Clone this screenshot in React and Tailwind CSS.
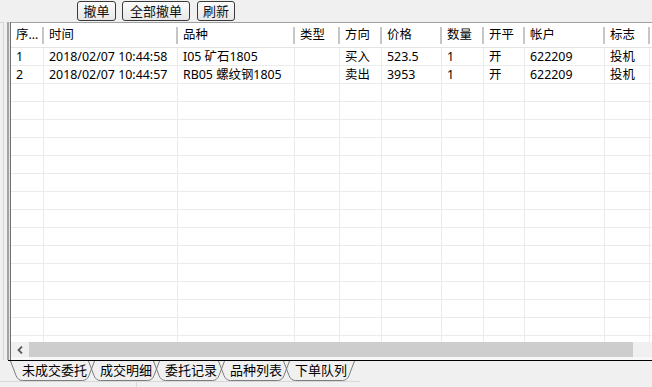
import React from 'react';

// column widths follow the grid lines of the list control
var cols = [
  { t: '序...', w: 'w-[33px]' },
  { t: '时间', w: 'w-[134px]' },
  { t: '品种', w: 'w-[117px]' },
  { t: '类型', w: 'w-[45px]' },
  { t: '方向', w: 'w-[42px]' },
  { t: '价格', w: 'w-[60px]' },
  { t: '数量', w: 'w-[42px]' },
  { t: '开平', w: 'w-[41px]' },
  { t: '帐户', w: 'w-[80px]' },
  { t: '标志', w: 'w-[45px]' },
];

var rows = [
  ['1', '2018/02/07 10:44:58', 'I05 矿石1805', '', '买入', '523.5', '1', '开', '622209', '投机'],
  ['2', '2018/02/07 10:44:57', 'RB05 螺纹钢1805', '', '卖出', '3953', '1', '开', '622209', '投机'],
];

var tabs = [
  { t: '未成交委托', w: 'w-[85px]', n: 85 },
  { t: '成交明细', w: 'w-[72px]', n: 72, active: true },
  { t: '委托记录', w: 'w-[72px]', n: 72 },
  { t: '品种列表', w: 'w-[72px]', n: 72 },
  { t: '下单队列', w: 'w-[72px]', n: 72 },
];

var ToolButton = function (props) {
  return (
    <button className={'h-[20px] ' + props.w + ' ' + props.m + ' shrink-0 rounded-[3px] border border-[#3a3a3a] bg-gradient-to-b from-[#fbfbfb] to-[#e8e8e8] text-[13px] leading-[18px] text-[#111]'}>
      {props.children}
    </button>
  );
};

var Tab = function (props) {
  var W = props.n;
  var d = 'M0.5,0 L6,14.5 Q8,19.5 12.5,19.5 L' + (W - 12.5) + ',19.5 Q' + (W - 8) + ',19.5 ' + (W - 6) + ',14.5 L' + (W - 0.5) + ',0';
  return (
    <div className={'relative h-[20px] shrink-0 ' + props.w + ' ' + (props.first ? '' : '-ml-[7px]') + (props.active ? ' z-10' : '')}>
      <svg className="absolute inset-0" width={W} height="20" viewBox={'0 0 ' + W + ' 20'}>
        <path d={d} fill="none" stroke="#7c7c7c" strokeWidth="1" />
      </svg>
      <span className="relative block pl-[12px] text-[13px] leading-[18px] text-black whitespace-nowrap">{props.t}</span>
    </div>
  );
};

export default function App() {
  var empty = [];
  for (var i = 0; i < 15; i++) empty.push(i);

  return (
    <div className="w-[652px] h-[387px] overflow-hidden bg-[#f0f0f0] font-['Noto_Sans','Noto_Sans_CJK_SC',sans-serif] text-black flex flex-col">
      {/* toolbar */}
      <div className="h-[22px] flex items-start pt-[1px] shrink-0">
        <ToolButton w="w-[39px]" m="ml-[77px]">撤单</ToolButton>
        <ToolButton w="w-[68px]" m="ml-[6px]">全部撤单</ToolButton>
        <ToolButton w="w-[38px]" m="ml-[7px]">刷新</ToolButton>
      </div>

      {/* main area */}
      <div className="h-[338px] flex shrink-0">
        <div className="flex w-[11px] shrink-0">
          <div className="w-[3px] border-t border-[#d4d4d4]" />
          <div className="w-[1px] bg-[#d6d6d6]" />
          <div className="w-[3px]" />
          <div className="w-[2px] bg-[#a3a3a3]" />
          <div className="w-[1px] bg-[#e6e6e6]" />
          <div className="w-[1px] bg-[#707070]" />
        </div>

        <div className="flex-1 flex flex-col border-t border-[#a0a0a0] bg-white min-w-0">
          {/* header */}
          <div className="h-[25px] flex border-b border-[#e4e4e4] shrink-0 text-[12.4px]">
            {cols.map(function (c, k) {
              return (
                <div key={k} className={c.w + ' shrink-0 flex items-center'}>
                  <span className="flex-1 pl-[5px] whitespace-nowrap overflow-hidden">{c.t}</span>
                  <div className="w-[2px] h-[17px] bg-[#c6c6c6]" />
                </div>
              );
            })}
          </div>

          {/* body */}
          <div className="flex-1 overflow-hidden text-[12.4px]">
            {rows.map(function (r, k) {
              return (
                <div key={k} className="h-[18px] flex border-b border-[#ebebeb]">
                  {cols.map(function (c, j) {
                    return (
                      <div key={j} className={c.w + ' shrink-0 border-r border-[#ebebeb] pl-[5px] leading-[17px] whitespace-nowrap overflow-hidden'}>{r[j]}</div>
                    );
                  })}
                </div>
              );
            })}
            {empty.map(function (k) {
              return (
                <div key={'e' + k} className="h-[18px] flex border-b border-[#ebebeb]">
                  {cols.map(function (c, j) {
                    return <div key={j} className={c.w + ' shrink-0 border-r border-[#ebebeb]'} />;
                  })}
                </div>
              );
            })}
          </div>

          {/* horizontal scrollbar */}
          <div className="h-[15px] flex bg-[#f0f0f0] shrink-0">
            <div className="w-[18px] flex items-center justify-center">
              <svg width="6" height="8" viewBox="0 0 6 8">
                <path d="M5,0.5 L1.5,4 L5,7.5" fill="none" stroke="#5a5a5a" strokeWidth="1.8" />
              </svg>
            </div>
            <div className="w-[604px] bg-[#cdcdcd]" />
            <div className="flex-1" />
          </div>
          <div className="h-[3px] bg-[#f8f8f8] shrink-0" />
        </div>
      </div>

      {/* sheet tabs */}
      <div className="h-[21px] flex shrink-0">
        <div className="w-[8px] shrink-0" />
        <div className="flex-1 border-t border-black flex pl-[2px]">
          {tabs.map(function (t, k) {
            return <Tab key={k} t={t.t} w={t.w} n={t.n} first={k === 0} active={t.active} />;
          })}
        </div>
      </div>

      {/* status bar */}
      <div className="flex-1 flex">
        <div className="w-[137px] border-t border-r border-[#d8d8d8]" />
        <div className="w-[223px] border-t border-[#d8d8d8]" />
      </div>
    </div>
  );
}
